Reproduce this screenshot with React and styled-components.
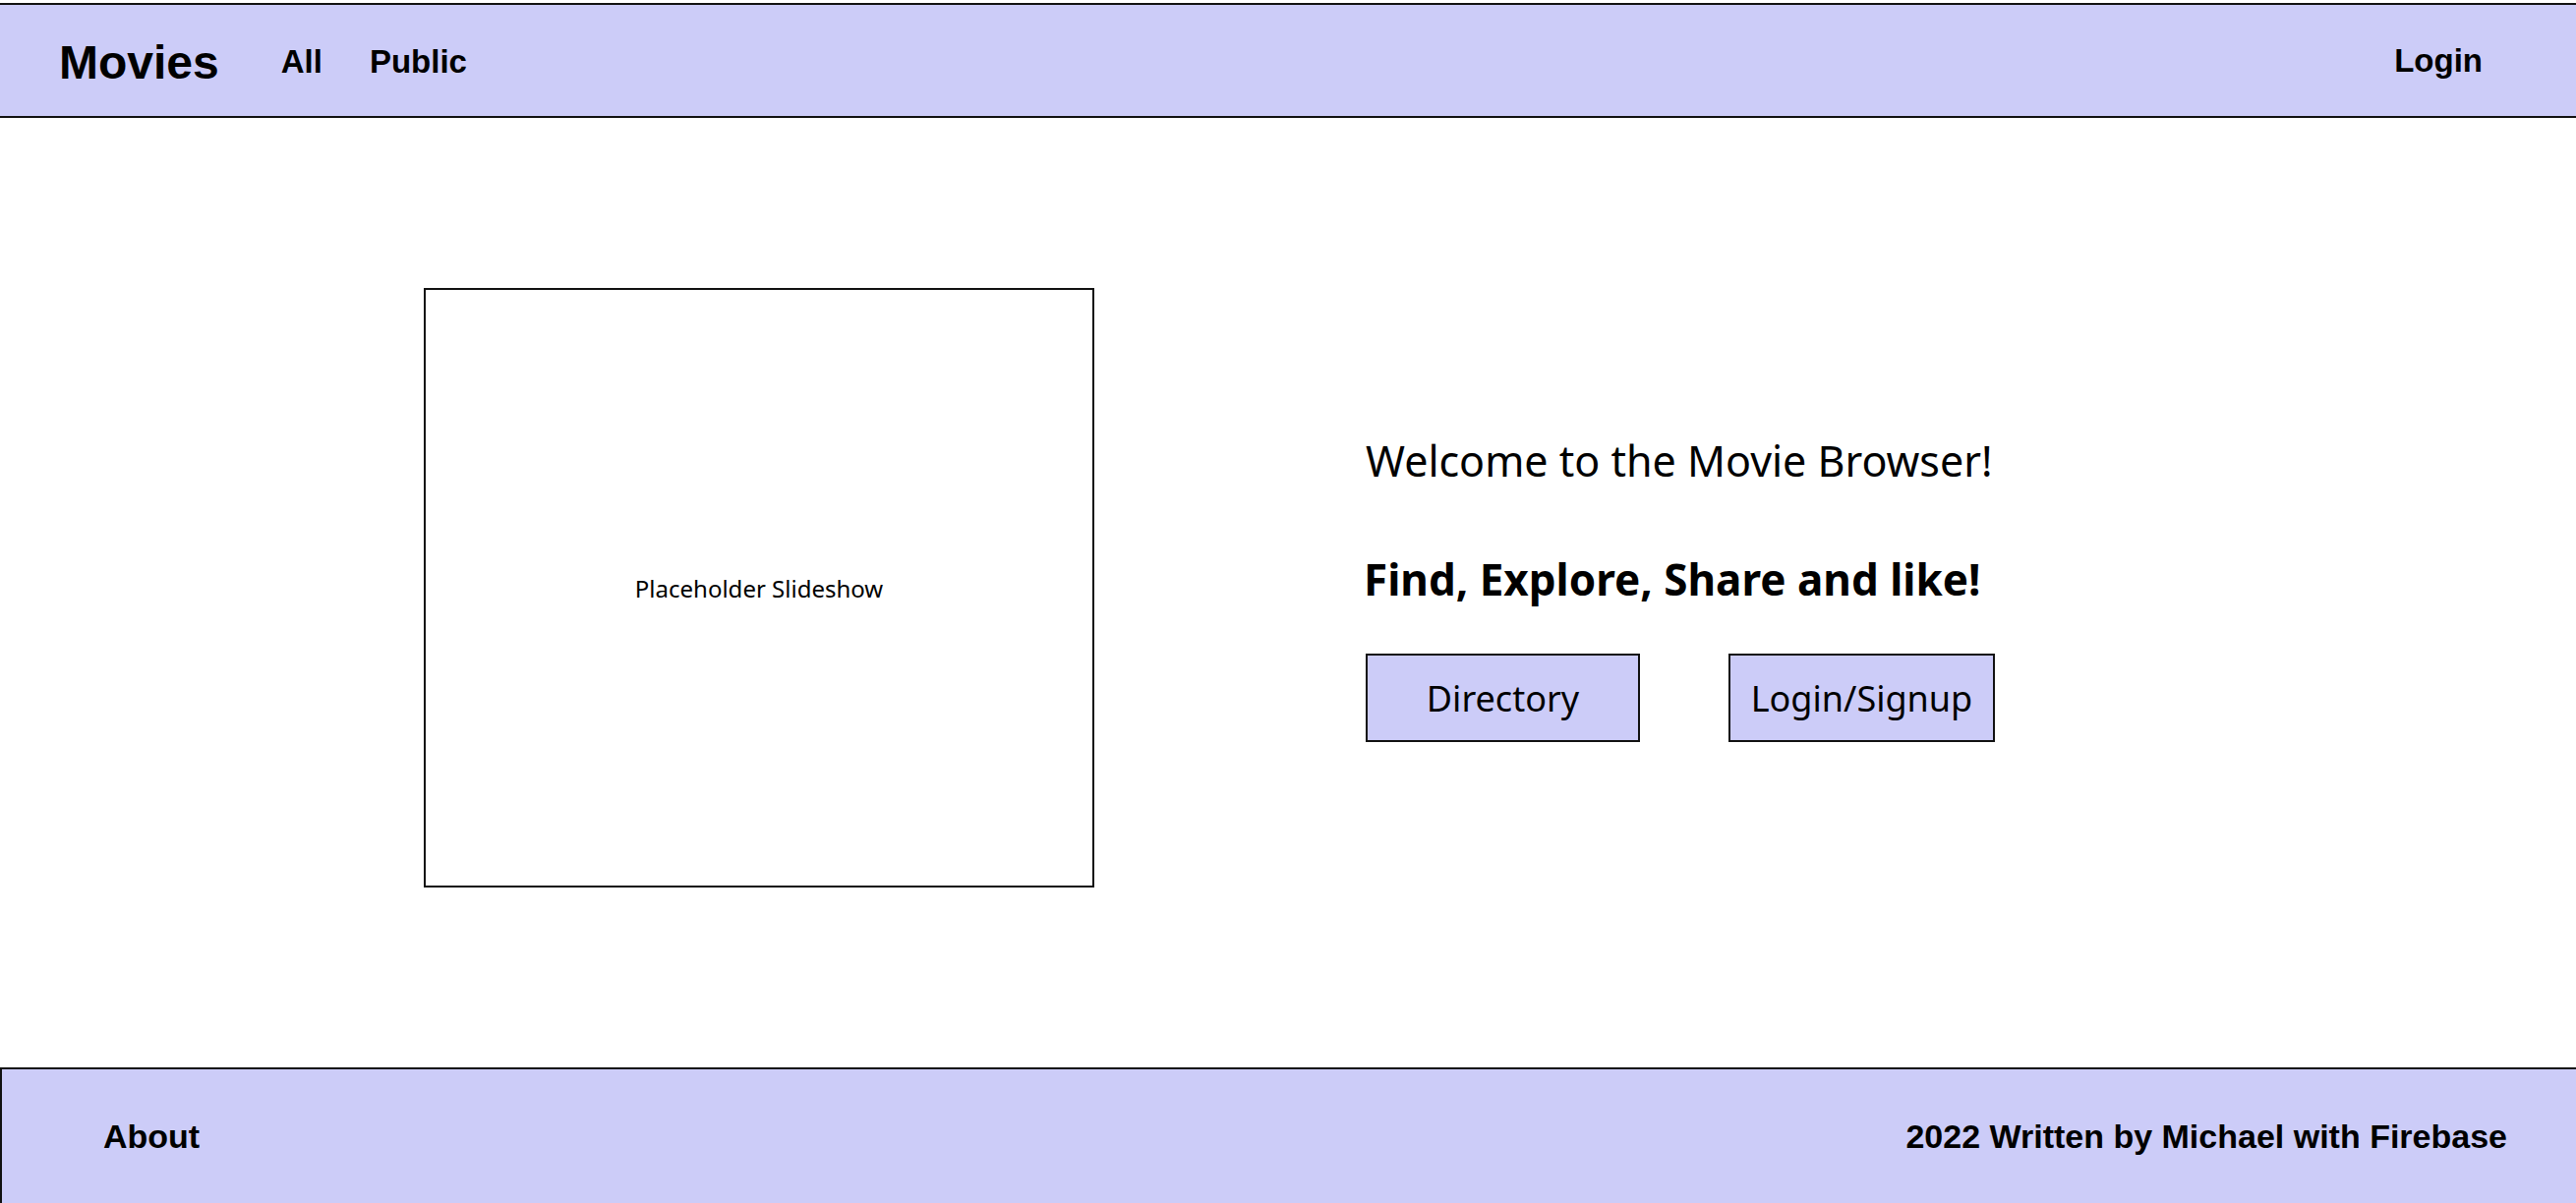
import React from "react";
import styled, { createGlobalStyle } from "styled-components";

const GlobalStyle = createGlobalStyle`
  html, body { margin: 0; padding: 0; background: #ffffff; }
  body { font-family: "Liberation Sans", Arial, sans-serif; color: #000; }
  #root { min-height: 100vh; }
`;

const LAVENDER = "#ccccf8";
const HAND = `"Noto Sans", "DejaVu Sans", sans-serif`;

const Page = styled.div`
  display: flex;
  flex-direction: column;
  height: 100vh;
  overflow: hidden;
`;

const Header = styled.header`
  margin-top: 3px;
  height: 113px;
  background: ${LAVENDER};
  border-top: 2px solid #111;
  border-bottom: 2px solid #111;
  display: flex;
  align-items: center;
  padding: 0 95px 0 60px;
`;

const Brand = styled.div`
  font-family: "Liberation Sans", Arial, sans-serif;
  font-weight: 700;
  font-size: 48px;
  margin-right: 63px;
  margin-top: 3px;
`;

const Nav = styled.nav`
  display: flex;
  gap: 48px;
  flex: 1;
  margin-top: 3px;
`;

const NavLink = styled.a`
  font-family: "Liberation Sans", Arial, sans-serif;
  font-weight: 700;
  font-size: 33px;
  color: #000;
  text-decoration: none;
`;

const Main = styled.main`
  flex: 1;
  display: flex;
  align-items: center;
  padding-left: 431px;
  padding-bottom: 10px;
  gap: 274px;
`;

const Slideshow = styled.div`
  width: 682px;
  height: 610px;
  box-sizing: border-box;
  border: 2px solid #111;
  display: flex;
  align-items: center;
  justify-content: center;
  font-family: ${HAND};
  font-size: 24px;
`;

const Intro = styled.section`
  display: flex;
  flex-direction: column;
  align-items: flex-start;
`;

const Welcome = styled.h1`
  margin: 0;
  font-family: ${HAND};
  font-weight: 400;
  font-size: 43px;
  line-height: 56px;
  padding-left: 2px;
`;

const Tagline = styled.h2`
  margin: 64px 0 0;
  font-family: ${HAND};
  font-weight: 700;
  font-size: 44px;
  line-height: 56px;
`;

const Buttons = styled.div`
  display: flex;
  gap: 90px;
  margin-top: 48px;
  padding-left: 2px;
`;

const Button = styled.button`
  width: ${(p) => p.$w}px;
  height: 90px;
  box-sizing: border-box;
  background: ${LAVENDER};
  border: 2px solid #111;
  font-family: ${HAND};
  font-size: 36px;
  color: #000;
  padding: 0;
  cursor: pointer;
`;

const Footer = styled.footer`
  height: 136px;
  background: ${LAVENDER};
  border-top: 2px solid #111;
  border-left: 2px solid #111;
  display: flex;
  align-items: center;
  justify-content: space-between;
  padding: 0 70px 0 103px;
`;

const FooterText = styled.span`
  font-family: "Liberation Sans", Arial, sans-serif;
  font-weight: 700;
  font-size: 34px;
`;

export default function App() {
  return (
    <>
      <GlobalStyle />
      <Page>
        <Header>
          <Brand>Movies</Brand>
          <Nav>
            <NavLink>All</NavLink>
            <NavLink>Public</NavLink>
          </Nav>
          <NavLink>Login</NavLink>
        </Header>
        <Main>
          <Slideshow>Placeholder Slideshow</Slideshow>
          <Intro>
            <Welcome>Welcome to the Movie Browser!</Welcome>
            <Tagline>Find, Explore, Share and like!</Tagline>
            <Buttons>
              <Button $w={279}>Directory</Button>
              <Button $w={271}>Login/Signup</Button>
            </Buttons>
          </Intro>
        </Main>
        <Footer>
          <FooterText>About</FooterText>
          <FooterText>2022 Written by Michael with Firebase</FooterText>
        </Footer>
      </Page>
    </>
  );
}
